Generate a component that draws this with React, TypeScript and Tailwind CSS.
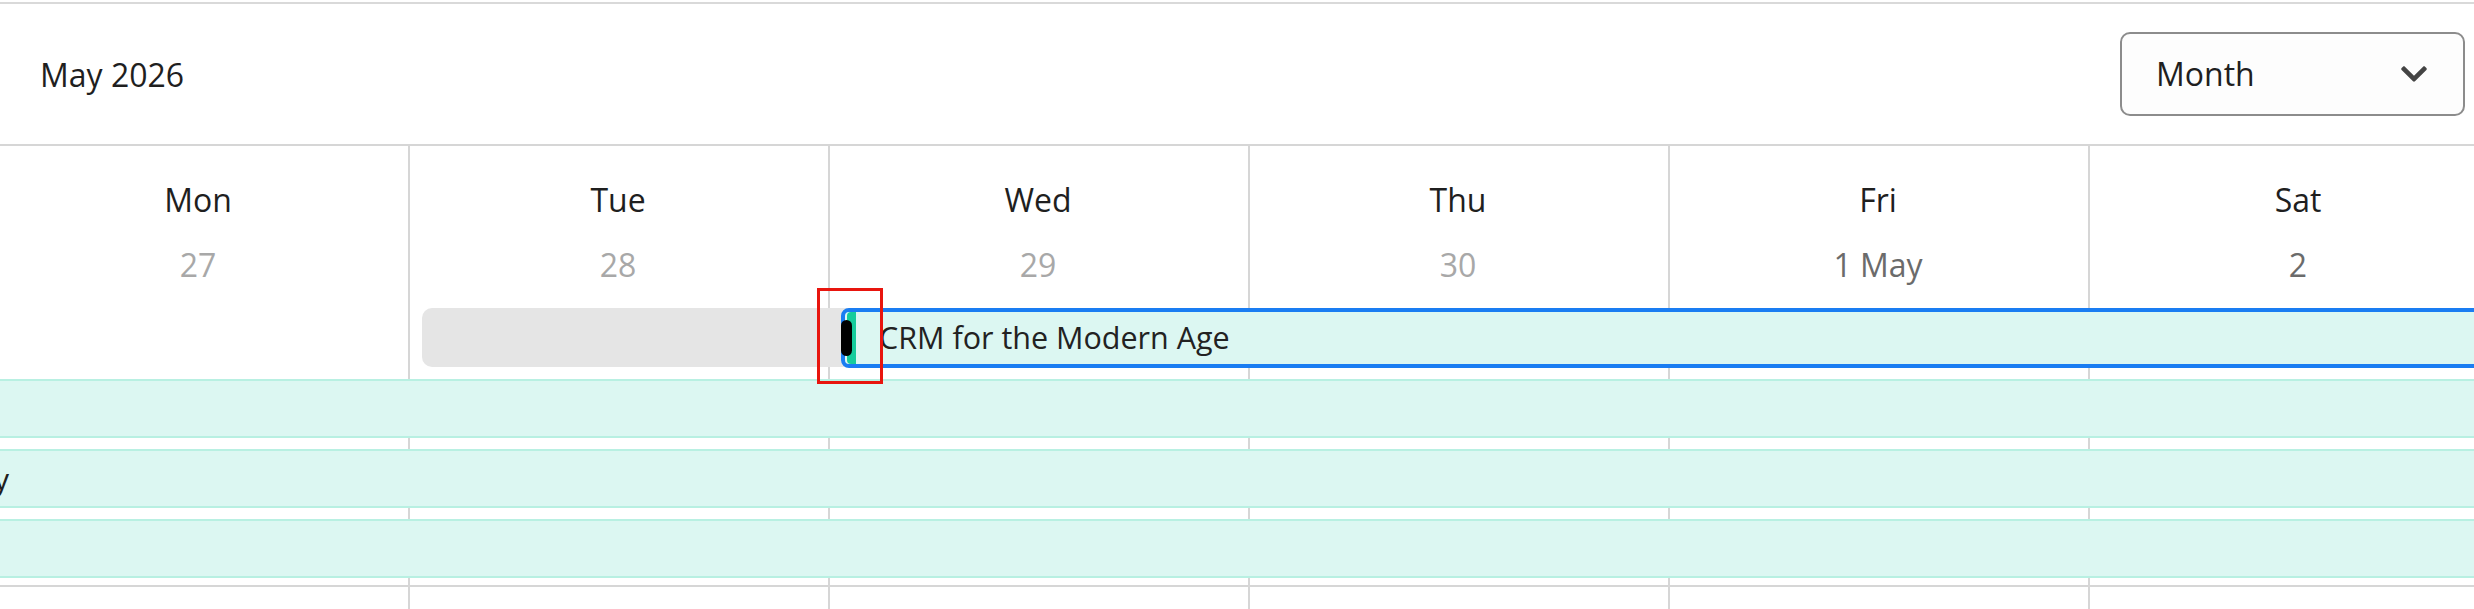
import { FaChevronDown } from "react-icons/fa";

const days = [
  { name: "Mon", date: "27", muted: true },
  { name: "Tue", date: "28", muted: true },
  { name: "Wed", date: "29", muted: true },
  { name: "Thu", date: "30", muted: true },
  { name: "Fri", date: "1 May", muted: false },
  { name: "Sat", date: "2", muted: false },
  { name: "", date: "", muted: false },
];

function ColumnLines() {
  return (
    <div className="absolute inset-0 grid grid-cols-7 pointer-events-none">
      {days.map((d, i) => (
        <div key={i} className="border-l-2 border-[#d6d6d6]" />
      ))}
    </div>
  );
}

function TealRow({ label }: { label?: string }) {
  return (
    <div className="h-[59px] mt-[11px] bg-[#dcf7f2] border-y-2 border-[#b8f0e2] flex items-center overflow-hidden">
      {label && (
        <div className="w-[21px] shrink-0 flex justify-end">
          <span className="text-[30px] text-[#202020] whitespace-nowrap">{label}</span>
        </div>
      )}
    </div>
  );
}

export default function App() {
  return (
    <div className="w-[2474px] h-[609px] overflow-hidden bg-white relative font-['Open_Sans',sans-serif] text-[#1f1f1f]">
      <div className="mt-[2px] border-t-2 border-[#d9d9d9]" />

      <div className="h-[140px] flex items-center justify-between pl-[40px] pr-[9px]">
        <span className="text-[32px] mt-[2px]">May 2026</span>
        <button className="w-[345px] h-[84px] rounded-[10px] border-2 border-[#8c8c8c] bg-[#fdfdfd] flex items-center justify-between pl-[34px] pr-[34px]">
          <span className="text-[32px]">Month</span>
          <FaChevronDown size={30} className="text-[#444]" />
        </button>
      </div>

      <div className="border-t-2 border-[#d6d6d6]" />

      <div className="w-[2940px] -ml-[12px]">
        <div className="relative h-[441px] border-b-2 border-[#d6d6d6]">
          <ColumnLines />
          <div className="relative">
            <div className="grid grid-cols-7 h-[162px]">
              {days.map((d, i) => (
                <div key={i} className="flex flex-col items-center pt-[32px]">
                  <span className="text-[32px] leading-[44px]">{d.name}</span>
                  <span
                    className={
                      d.muted
                        ? "text-[32px] leading-[44px] mt-[21px] text-[#a8a8a8]"
                        : "text-[32px] leading-[44px] mt-[21px] text-[#6b6b6b]"
                    }
                  >
                    {d.date}
                  </span>
                </div>
              ))}
            </div>

            <div className="grid grid-cols-7 h-[60px]">
              <div className="col-start-2 col-span-2 pl-[14px] relative">
                <div className="h-[59px] rounded-l-[10px] bg-[#e5e5e5]" />
                <div className="absolute top-0 left-[433px] right-[-2320px] h-[60px] rounded-l-[8px] border-4 border-[#1a7df2] bg-[#dcf7f2] flex items-center">
                  <div className="absolute left-[2px] top-0 bottom-0 w-[9px] rounded-l-[4px] bg-[#16cc9c]" />
                  <div className="absolute -left-[4px] top-[8px] w-[11px] h-[36px] rounded-full bg-black" />
                  <span className="pl-[34px] text-[30.5px] text-[#222] whitespace-nowrap">CRM for the Modern Age</span>
                </div>
              </div>
            </div>

            <TealRow />
            <TealRow label="Company Holiday" />
            <TealRow />
          </div>
        </div>

        <div className="relative h-[30px]">
          <ColumnLines />
        </div>
      </div>

      <div className="absolute left-[817px] top-[288px] w-[66px] h-[96px] border-[3px] border-[#e8150e]" />
    </div>
  );
}
